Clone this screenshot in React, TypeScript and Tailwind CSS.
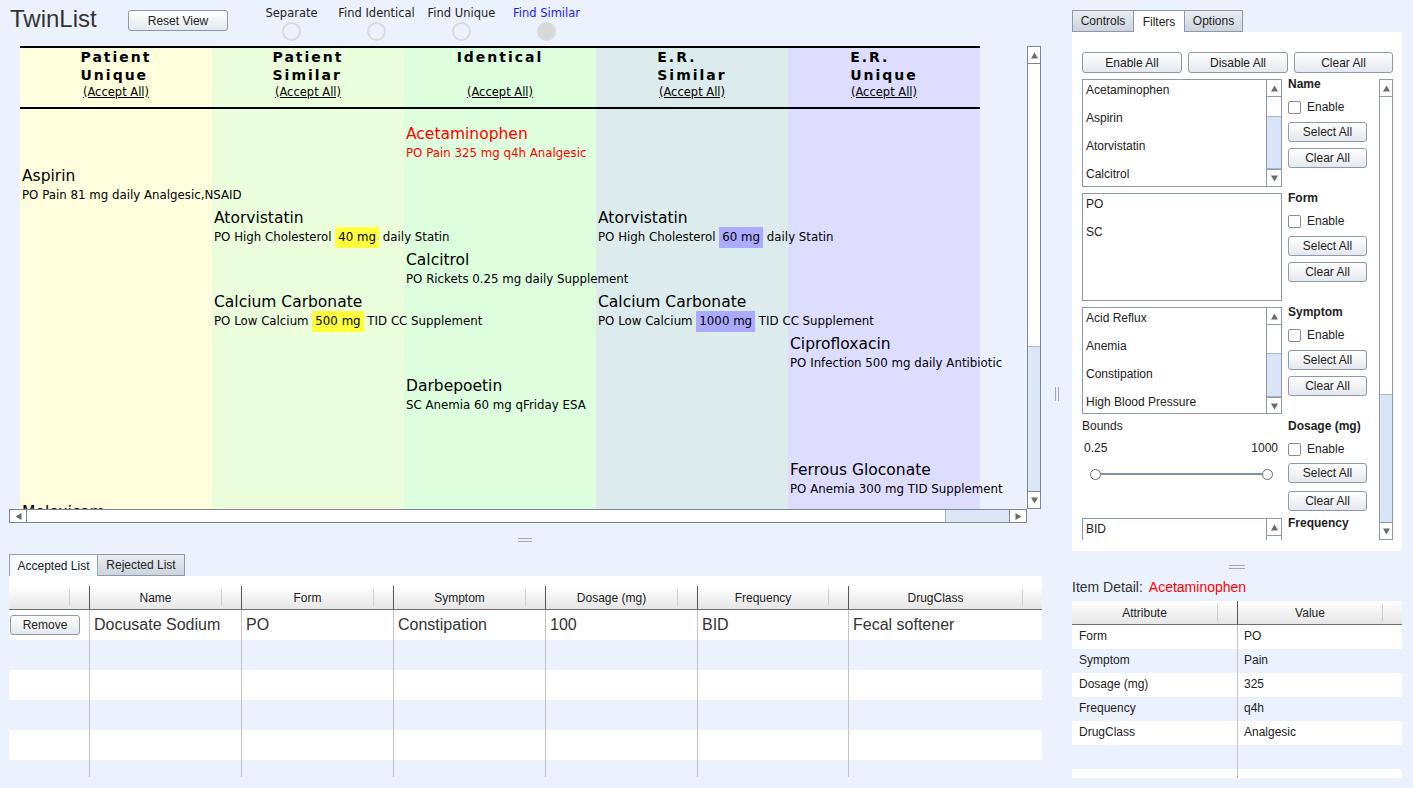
import React from "react";

type Dir = "up" | "down" | "left" | "right";

function Tri({ dir }: { dir: Dir }) {
  const pts =
    dir === "up"
      ? "3.5,0.5 7,6.5 0,6.5"
      : dir === "down"
      ? "0,0.5 7,0.5 3.5,6.5"
      : dir === "left"
      ? "0.5,3.5 6.5,0 6.5,7"
      : "0.5,0 6.5,3.5 0.5,7";
  return (
    <svg width="7" height="7" viewBox="0 0 7 7">
      <polygon points={pts} fill="#6a6a6a" />
    </svg>
  );
}

function Btn({ label, className }: { label: string; className: string }) {
  return (
    <button
      className={`${className} shrink-0 rounded-[3px] border border-[#8d99aa] bg-linear-to-b from-white to-[#e4e8ee] text-[12px] text-[#222] flex items-center justify-center leading-none`}
    >
      {label}
    </button>
  );
}

function Check() {
  return <div className="w-[13px] h-[13px] rounded-[2px] border border-[#8d8d8d] bg-white shrink-0" />;
}

/* ---------------- Visualization ---------------- */

type Cell = {
  col: string;
  name: string;
  pre: string;
  hl?: string;
  post?: string;
  blue?: boolean;
  red?: boolean;
};

const ROWS: Cell[][] = [
  [{ col: "col-start-3", name: "Acetaminophen", pre: "PO Pain 325 mg q4h Analgesic", red: true }],
  [{ col: "col-start-1", name: "Aspirin", pre: "PO Pain 81 mg daily Analgesic,NSAID" }],
  [
    { col: "col-start-2", name: "Atorvistatin", pre: "PO High Cholesterol ", hl: "40 mg", post: " daily Statin" },
    { col: "col-start-4", name: "Atorvistatin", pre: "PO High Cholesterol ", hl: "60 mg", post: " daily Statin", blue: true },
  ],
  [{ col: "col-start-3", name: "Calcitrol", pre: "PO Rickets 0.25 mg daily Supplement" }],
  [
    { col: "col-start-2", name: "Calcium Carbonate", pre: "PO Low Calcium ", hl: "500 mg", post: " TID CC Supplement" },
    { col: "col-start-4", name: "Calcium Carbonate", pre: "PO Low Calcium ", hl: "1000 mg", post: " TID CC Supplement", blue: true },
  ],
  [{ col: "col-start-5", name: "Ciprofloxacin", pre: "PO Infection 500 mg daily Antibiotic" }],
  [{ col: "col-start-3", name: "Darbepoetin", pre: "SC Anemia 60 mg qFriday ESA" }],
  [],
  [{ col: "col-start-5", name: "Ferrous Gloconate", pre: "PO Anemia 300 mg TID Supplement" }],
  [{ col: "col-start-1", name: "Meloxicam", pre: "" }],
];

const HEADERS: [string, string][] = [
  ["Patient", "Unique"],
  ["Patient", "Similar"],
  ["Identical", ""],
  ["E.R.", "Similar"],
  ["E.R.", "Unique"],
];

function Viz() {
  return (
    <div className="w-[960px] h-full bg-[linear-gradient(to_right,#ffffdd_0px,#ffffdd_192px,#ebffdd_192px,#ebffdd_384px,#ddffdd_384px,#ddffdd_576px,#dcecec_576px,#dcecec_768px,#ddddff_768px,#ddddff_960px)]">
      <div className="h-[63px] border-y-2 border-black grid grid-cols-[repeat(5,192px)]">
        {HEADERS.map(([a, b], i) => (
          <div key={i} className="flex flex-col items-center">
            <div className="h-[36px] text-left font-bold text-[14px] leading-[18px] tracking-[2px] text-black">
              <div>{a}</div>
              <div>{b}</div>
            </div>
            <div className="text-[11.5px] leading-[16px] underline text-black">(Accept All)</div>
          </div>
        ))}
      </div>
      <div className="pt-[16px]">
        {ROWS.map((row, ri) => (
          <div key={ri} className="h-[42px] grid grid-cols-[repeat(5,192px)]">
            {row.map((c, ci) => (
              <div
                key={ci}
                className={`${c.col} pl-[2px] whitespace-nowrap ${c.red ? "text-[#ff0000]" : "text-black"}`}
              >
                <div className="text-[15.5px] leading-[18px]">{c.name}</div>
                {c.pre && (
                  <div className="text-[11.8px] leading-[21px]">
                    {c.pre}
                    {c.hl && (
                      <span
                        className={`inline-block leading-[21px] px-[3px] ${c.blue ? "bg-[#aaaaff]" : "bg-[#ffff3c]"}`}
                      >
                        {c.hl}
                      </span>
                    )}
                    {c.post}
                  </div>
                )}
              </div>
            ))}
          </div>
        ))}
      </div>
    </div>
  );
}

/* ---------------- Left column ---------------- */

const RADIOS = ["Separate", "Find Identical", "Find Unique", "Find Similar"];

function TopBar() {
  return (
    <div className="h-[46px] flex items-start shrink-0">
      <div className="w-[128px] pl-[10px] pt-[5px] text-[24px] leading-[28px] text-[#333]">TwinList</div>
      <Btn label="Reset View" className="mt-[10px] w-[100px] h-[21px]" />
      <div className="ml-[21px] flex font-['DejaVu_Sans',sans-serif]">
        {RADIOS.map((r, i) => (
          <div key={r} className="w-[85px] flex flex-col items-center">
            <div
              className={`mt-[6px] leading-[14px] text-[11.5px] whitespace-nowrap ${
                i === 3 ? "text-[#1a1aff]" : "text-[#222]"
              }`}
            >
              {r}
            </div>
            <div
              className={`mt-[2px] w-[19px] h-[19px] rounded-full border-2 border-[#dadada] ${
                i === 3 ? "bg-[#d9d9d9]" : ""
              }`}
            />
          </div>
        ))}
      </div>
    </div>
  );
}

function VizPane() {
  return (
    <div className="h-[477px] flex pl-[9px] shrink-0">
      <div className="w-[1018px] flex flex-col">
        <div className="h-[463px] overflow-hidden pl-[11px] font-['DejaVu_Sans',sans-serif]">
          <Viz />
        </div>
        <div className="h-[14px] border border-[#7b8799] bg-white flex">
          <div className="w-[17px] border-r border-[#7b8799] flex items-center justify-center">
            <Tri dir="left" />
          </div>
          <div className="flex-1" />
          <div className="w-[64px] bg-[#dbe6f7] border-l border-[#a9b6c8]" />
          <div className="w-[17px] border-l border-[#7b8799] flex items-center justify-center">
            <Tri dir="right" />
          </div>
        </div>
      </div>
      <div className="w-[14px] h-[463px] border border-[#7b8799] bg-white flex flex-col">
        <div className="h-[17px] shrink-0 border-b border-[#7b8799] flex items-center justify-center">
          <Tri dir="up" />
        </div>
        <div className="h-[282px] shrink-0" />
        <div className="flex-1 bg-[#dbe6f7] border-t border-[#a9b6c8]" />
        <div className="h-[17px] shrink-0 border-t border-[#7b8799] flex items-center justify-center">
          <Tri dir="down" />
        </div>
      </div>
    </div>
  );
}

const COLS = [
  { w: "w-[80px]", h: "" },
  { w: "w-[152px]", h: "Name" },
  { w: "w-[152px]", h: "Form" },
  { w: "w-[152px]", h: "Symptom" },
  { w: "w-[152px]", h: "Dosage (mg)" },
  { w: "w-[151px]", h: "Frequency" },
  { w: "w-[194px]", h: "DrugClass" },
];

const ROW1 = ["", "Docusate Sodium", "PO", "Constipation", "100", "BID", "Fecal softener"];

function AcceptedTable() {
  const bodyRows = [
    { h: "h-[30px]", bg: "bg-white", data: true },
    { h: "h-[30px]", bg: "", data: false },
    { h: "h-[30px]", bg: "bg-white", data: false },
    { h: "h-[30px]", bg: "", data: false },
    { h: "h-[30px]", bg: "bg-white", data: false },
    { h: "h-[17px]", bg: "", data: false },
  ];
  return (
    <div className="ml-[9px] w-[1033px] h-[201px] flex flex-col">
      <div className="h-[10px] bg-white" />
      <div className="h-[24px] flex border-b border-[#6f6f6f] bg-linear-to-b from-white to-[#e6e6e6]">
        {COLS.map((c, i) => (
          <div key={i} className={`${c.w} flex ${i > 0 ? "border-l border-[#555]" : ""}`}>
            <div className="flex-1 flex items-center justify-center text-[12px] text-[#222]">{c.h}</div>
            <div className="w-px h-[17px] self-center bg-[#cfcfcf]" />
            <div className="w-[19px]" />
          </div>
        ))}
      </div>
      {bodyRows.map((r, ri) => (
        <div key={ri} className={`${r.h} flex ${r.bg}`}>
          {COLS.map((c, i) => (
            <div
              key={i}
              className={`${c.w} flex items-center ${i > 0 ? "border-l border-[#c4c4c4] pl-[4px]" : ""} text-[16px] text-[#333] whitespace-nowrap`}
            >
              {r.data && i === 0 ? (
                <Btn label="Remove" className="ml-[1px] w-[70px] h-[20px]" />
              ) : r.data ? (
                ROW1[i]
              ) : null}
            </div>
          ))}
        </div>
      ))}
    </div>
  );
}

function LeftColumn() {
  return (
    <div className="w-[1050px] flex flex-col">
      <TopBar />
      <VizPane />
      <div className="h-[31px] flex justify-center shrink-0">
        <div className="mt-[15px] w-[14px] flex flex-col gap-[2px]">
          <div className="h-px bg-[#a5a5a5]" />
          <div className="h-px bg-[#a5a5a5]" />
        </div>
      </div>
      <div className="h-[22px] pl-[9px] flex shrink-0">
        <div className="w-[89px] h-[22px] bg-[#f7faff] border border-b-0 border-[#97a3b4] flex items-center justify-center text-[12px] text-[#222]">
          Accepted List
        </div>
        <div className="w-[87px] h-[22px] bg-linear-to-b from-[#e9edf2] to-[#cdd4de] border border-l-0 border-[#8d99aa] flex items-center justify-center text-[12px] text-[#222]">
          Rejected List
        </div>
      </div>
      <AcceptedTable />
    </div>
  );
}

/* ---------------- Right column ---------------- */

function SmallVScroll({ before, thumb }: { before: string; thumb: string }) {
  return (
    <div className="w-[15px] h-full border-l border-[#8d99aa] flex flex-col bg-white">
      <div className="h-[17px] shrink-0 border-b border-[#8d99aa] flex items-center justify-center">
        <Tri dir="up" />
      </div>
      <div className={`${before} shrink-0`} />
      <div className={`${thumb} shrink-0 bg-[#d9e5f7] border-y border-[#a9b6c8]`} />
      <div className="flex-1" />
      <div className="h-[17px] shrink-0 border-t border-[#8d99aa] flex items-center justify-center">
        <Tri dir="down" />
      </div>
    </div>
  );
}

function ListBox({
  items,
  h,
  scroll,
}: {
  items: string[];
  h: string;
  scroll?: { before: string; thumb: string } | "top";
}) {
  return (
    <div className={`w-[200px] ${h} shrink-0 border border-[#8d99aa] bg-white flex overflow-hidden`}>
      <div className="flex-1 pl-[3px]">
        {items.map((it) => (
          <div key={it} className="h-[28px] leading-[20px] text-[12px] text-[#222] whitespace-nowrap">
            {it}
          </div>
        ))}
      </div>
      {scroll === "top" ? (
        <div className="w-[15px] border-l border-[#8d99aa]">
          <div className="h-[17px] border-b border-[#8d99aa] flex items-center justify-center">
            <Tri dir="up" />
          </div>
        </div>
      ) : scroll ? (
        <SmallVScroll before={scroll.before} thumb={scroll.thumb} />
      ) : null}
    </div>
  );
}

function SideControls({ title, short }: { title: string; short?: boolean }) {
  return (
    <div className="w-[91px] flex flex-col">
      <div className="-mt-[2px] leading-[14px] font-bold text-[12px] text-[#222] whitespace-nowrap">{title}</div>
      <div className="mt-[10px] flex items-center gap-[6px]">
        <Check />
        {!short && <span className="leading-[13px]">Enable</span>}
      </div>
      {!short && <Btn label="Select All" className="mt-[8px] w-[79px] h-[20px]" />}
      {!short && <Btn label="Clear All" className="mt-[6px] w-[79px] h-[20px]" />}
    </div>
  );
}

function FiltersPanel() {
  return (
    <div className="h-[519px] bg-white flex flex-col pl-[10px] shrink-0">
      <div className="pt-[20px] flex gap-[6px]">
        <Btn label="Enable All" className="w-[100px] h-[21px]" />
        <Btn label="Disable All" className="w-[100px] h-[21px]" />
        <Btn label="Clear All" className="w-[99px] h-[21px]" />
      </div>
      <div className="mt-[6px] h-[461px] flex">
        <div className="w-[297px] h-[465px] -mt-[4px] pt-[4px] overflow-hidden flex flex-col gap-[6px]">
          <div className="flex gap-[6px] shrink-0">
            <ListBox
              items={["Acetaminophen", "Aspirin", "Atorvistatin", "Calcitrol"]}
              h="h-[108px]"
              scroll={{ before: "h-[19px]", thumb: "h-[53px]" }}
            />
            <SideControls title="Name" />
          </div>
          <div className="flex gap-[6px] shrink-0">
            <ListBox items={["PO", "SC"]} h="h-[108px]" />
            <SideControls title="Form" />
          </div>
          <div className="flex gap-[6px] shrink-0">
            <ListBox
              items={["Acid Reflux", "Anemia", "Constipation", "High Blood Pressure"]}
              h="h-[107px]"
              scroll={{ before: "h-[28px]", thumb: "h-[44px]" }}
            />
            <SideControls title="Symptom" />
          </div>
          <div className="h-[92px] flex gap-[6px] shrink-0">
            <div className="w-[200px] flex flex-col">
              <div className="leading-[12px]">Bounds</div>
              <div className="mt-[9px] leading-[14px] flex justify-between pl-[2px] pr-[4px]">
                <span>0.25</span>
                <span>1000</span>
              </div>
              <div className="mt-[13px] ml-[8px] w-[183px] h-[12px] flex items-center">
                <div className="w-[11px] h-[11px] rounded-full border border-[#6d6d6d] bg-white shrink-0" />
                <div className="flex-1 h-[2px] bg-[#8190a5]" />
                <div className="w-[11px] h-[11px] rounded-full border border-[#6d6d6d] bg-white shrink-0" />
              </div>
            </div>
            <div className="w-[91px] flex flex-col">
              <div className="leading-[12px] font-bold whitespace-nowrap">Dosage (mg)</div>
              <div className="mt-[11px] flex items-center gap-[6px]">
                <Check />
                <span className="leading-[13px]">Enable</span>
              </div>
              <Btn label="Select All" className="mt-[7px] w-[79px] h-[20px]" />
              <Btn label="Clear All" className="mt-[8px] w-[79px] h-[20px]" />
            </div>
          </div>
          <div className="flex gap-[6px] shrink-0">
            <ListBox items={["BID"]} h="h-[40px]" scroll="top" />
            <SideControls title="Frequency" short />
          </div>
        </div>
        <div className="w-[14px] h-[461px] border border-[#8d99aa] bg-white flex flex-col">
          <div className="h-[17px] shrink-0 border-b border-[#8d99aa] flex items-center justify-center">
            <Tri dir="up" />
          </div>
          <div className="h-[297px] shrink-0" />
          <div className="flex-1 bg-[#d9e5f7] border-t border-[#a9b6c8]" />
          <div className="h-[17px] shrink-0 border-t border-[#8d99aa] flex items-center justify-center">
            <Tri dir="down" />
          </div>
        </div>
      </div>
    </div>
  );
}

const DETAIL = [
  ["Form", "PO"],
  ["Symptom", "Pain"],
  ["Dosage (mg)", "325"],
  ["Frequency", "q4h"],
  ["DrugClass", "Analgesic"],
  ["", ""],
];

function DetailTable() {
  return (
    <div className="mt-[5px] w-[330px] flex flex-col">
      <div className="h-[24px] flex border-b border-[#6f6f6f] bg-linear-to-b from-white to-[#e6e6e6]">
        {["Attribute", "Value"].map((h, i) => (
          <div key={h} className={`w-[165px] flex ${i > 0 ? "border-l border-[#555]" : ""}`}>
            <div className="flex-1 flex items-center justify-center text-[12px] text-[#222]">{h}</div>
            <div className="w-px h-[17px] self-center bg-[#cfcfcf]" />
            <div className="w-[19px]" />
          </div>
        ))}
      </div>
      {DETAIL.map(([a, v], i) => (
        <div key={i} className={`h-[24px] flex ${i % 2 === 0 ? "bg-white" : ""}`}>
          <div className="w-[165px] pl-[7px] leading-[23px] text-[12px] text-[#222]">{a}</div>
          <div className="w-[165px] border-l border-[#c4c4c4] pl-[6px] leading-[23px] text-[12px] text-[#222]">
            {v}
          </div>
        </div>
      ))}
      <div className="h-[9px] flex bg-white">
        <div className="w-[165px]" />
        <div className="w-[165px] border-l border-[#c4c4c4]" />
      </div>
    </div>
  );
}

function RightColumn() {
  return (
    <div className="w-[330px] flex flex-col">
      <div className="mt-[10px] h-[22px] flex shrink-0">
        <div className="w-[62px] h-[22px] bg-linear-to-b from-[#e9edf2] to-[#cdd4de] border border-[#8d99aa] flex items-center justify-center">
          Controls
        </div>
        <div className="w-[50px] h-[22px] bg-white border-t border-[#8d99aa] flex items-center justify-center">
          Filters
        </div>
        <div className="w-[59px] h-[22px] bg-linear-to-b from-[#e9edf2] to-[#cdd4de] border border-[#8d99aa] flex items-center justify-center">
          Options
        </div>
      </div>
      <FiltersPanel />
      <div className="h-[27px] flex justify-center shrink-0">
        <div className="mt-[14px] w-[16px] flex flex-col gap-[2px]">
          <div className="h-px bg-[#a5a5a5]" />
          <div className="h-px bg-[#a5a5a5]" />
        </div>
      </div>
      <div className="h-[18px] flex items-center text-[14px] leading-[18px] shrink-0">
        <span className="text-[#333]">Item Detail:</span>
        <span className="ml-[6px] text-[#ff0000]">Acetaminophen</span>
      </div>
      <DetailTable />
    </div>
  );
}

export default function App() {
  return (
    <div className="w-[1413px] h-[788px] overflow-hidden bg-[#ebf2fe] flex font-['Liberation_Sans',Arial,sans-serif] text-[12px] text-[#222]">
      <LeftColumn />
      <div className="w-[22px] flex items-center pl-[5px]">
        <div className="h-[14px] flex gap-[2px]">
          <div className="w-px bg-[#a5a5a5]" />
          <div className="w-px bg-[#a5a5a5]" />
        </div>
      </div>
      <RightColumn />
    </div>
  );
}
